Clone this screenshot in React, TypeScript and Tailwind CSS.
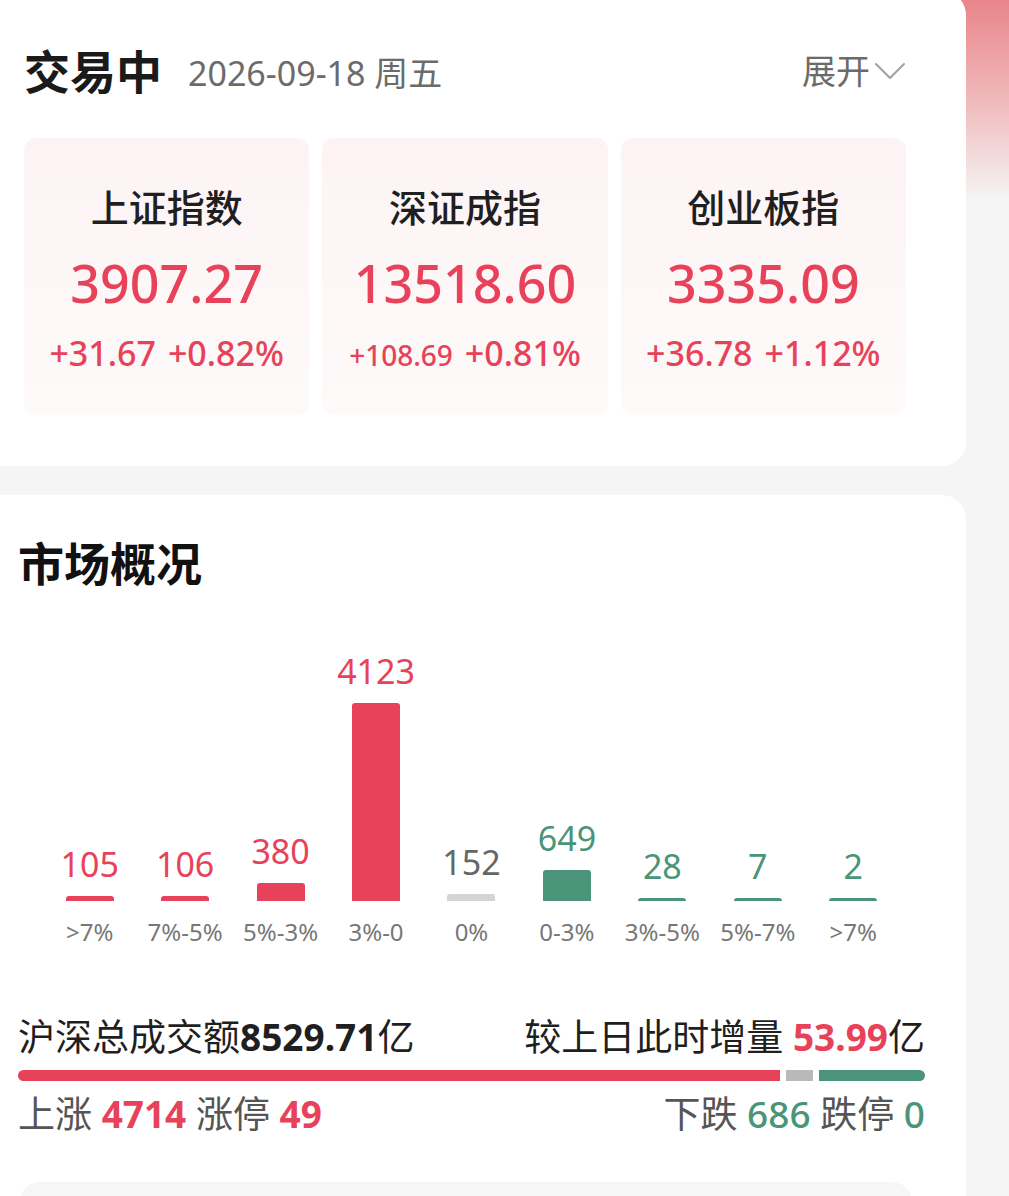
import React from 'react';

// 指数卡片
const indices = [
  { name: '上证指数', value: '3907.27', change: '+31.67', pct: '+0.82%', small: false },
  { name: '深证成指', value: '13518.60', change: '+108.69', pct: '+0.81%', small: true },
  { name: '创业板指', value: '3335.09', change: '+36.78', pct: '+1.12%', small: false },
];

type Tone = 'red' | 'gray' | 'green';

const dist: { v: number; label: string; tone: Tone }[] = [
  { v: 105, label: '>7%', tone: 'red' },
  { v: 106, label: '7%-5%', tone: 'red' },
  { v: 380, label: '5%-3%', tone: 'red' },
  { v: 4123, label: '3%-0', tone: 'red' },
  { v: 152, label: '0%', tone: 'gray' },
  { v: 649, label: '0-3%', tone: 'green' },
  { v: 28, label: '3%-5%', tone: 'green' },
  { v: 7, label: '5%-7%', tone: 'green' },
  { v: 2, label: '>7%', tone: 'green' },
];

const textTone: Record<Tone, string> = {
  red: 'text-[#e8425b]',
  gray: 'text-[#666666]',
  green: 'text-[#4a9478]',
};

const barTone: Record<Tone, string> = {
  red: 'bg-[#e8425b]',
  gray: 'bg-[#d4d4d4]',
  green: 'bg-[#4a957a]',
};

const MAX_H = 198;

const ChevronDown = () => (
  <svg width="32" height="20" viewBox="0 0 32 20" fill="none" className="ml-1">
    <path d="M2 3 L16 17 L30 3" stroke="#a0a0a0" strokeWidth="2" strokeLinecap="round" strokeLinejoin="round" />
  </svg>
);

const IndexCard = ({ item }: { item: (typeof indices)[number] }) => (
  <div className="h-[277px] rounded-[12px] bg-[linear-gradient(180deg,#fdf3f4_0%,#fefafa_100%)] flex flex-col items-center pt-[45px]">
    <div className="text-[38px] leading-[48px] font-medium text-[#1f1f1f]">{item.name}</div>
    <div className="mt-[22px] text-[52px] leading-[60px] font-medium text-[#e8425b]">{item.value}</div>
    <div className="mt-[20px] flex items-baseline gap-3 leading-[40px] font-medium text-[#e8425b]">
      <span className={item.small ? 'text-[28px]' : 'text-[34px]'}>{item.change}</span>
      <span className="text-[34px]">{item.pct}</span>
    </div>
  </div>
);

export default function App() {
  // 进度条宽度（上涨 / 平盘 / 下跌）
  const segs = { up: 761, flat: 27, down: 106 };

  return (
    <div className="relative h-[1196px] overflow-hidden bg-[linear-gradient(180deg,#e8858a_0px,#f0b9bb_100px,#f5f5f5_200px,#f5f5f5_100%)] font-['Noto_Sans','Noto_Sans_CJK_SC',sans-serif]">
      {/* 交易中 */}
      <div className="-mt-[9px] w-[966px] bg-white rounded-r-[24px] pl-6 pr-[60px] pt-[52px] pb-[51px]">
        <div className="h-14 flex items-center justify-between">
          <div className="flex items-center">
            <span className="text-[46px] font-bold text-[#1a1a1a] leading-[56px]">交易中</span>
            <span className="ml-[26px] mt-1 text-[34px] text-[#6b6b6b] leading-[56px]">2026-09-18 周五</span>
          </div>
          <div className="flex items-center text-[34px] text-[#6b6b6b]">
            展开
            <ChevronDown />
          </div>
        </div>
        <div className="mt-[39px] grid grid-cols-3 gap-[13px]">
          {indices.map((it) => (
            <IndexCard key={it.name} item={it} />
          ))}
        </div>
      </div>

      {/* 市场概况 */}
      <div className="mt-[29px] w-[966px] bg-white rounded-tr-[24px] pl-[18px] pr-[41px] pt-[40px] pb-10">
        <div className="text-[46px] leading-[56px] font-bold text-[#111111]">市场概况</div>

        <div className="mt-[60px] px-6 grid grid-cols-9">
          {dist.map((d, i) => {
            const h = Math.max(3, Math.round((d.v / 4123) * MAX_H));
            return (
              <div key={i} className="flex flex-col items-center">
                <div className="h-[250px] flex flex-col items-center justify-end">
                  <div className={`text-[34px] leading-[40px] ${textTone[d.tone]}`}>{d.v}</div>
                  <div className={`mt-3 w-12 rounded-t-[3px] ${barTone[d.tone]}`} style={{ height: h }} />
                </div>
                <div className="mt-[15px] text-[24px] leading-[32px] text-[#777777] whitespace-nowrap">{d.label}</div>
              </div>
            );
          })}
        </div>

        <div className="mt-[67px] flex items-center justify-between text-[37px] leading-[44px] text-[#1f1f1f]">
          <div>
            沪深总成交额<span className="font-bold">8529.71</span>亿
          </div>
          <div>
            较上日此时增量 <span className="font-bold text-[#e8425b]">53.99</span>亿
          </div>
        </div>

        <div className="mt-[11px] h-[11px] flex gap-[6px]">
          <div className="rounded-l-full bg-[#e8425b]" style={{ flexGrow: segs.up }} />
          <div className="bg-[#b9b9bb]" style={{ flexGrow: segs.flat }} />
          <div className="rounded-r-full bg-[#4a957a]" style={{ flexGrow: segs.down }} />
        </div>

        <div className="mt-[11px] flex items-center justify-between text-[37px] leading-[44px] text-[#555555]">
          <div>
            上涨 <span className="font-bold text-[#e8425b]">4714</span> 涨停 <span className="font-bold text-[#e8425b]">49</span>
          </div>
          <div>
            下跌 <span className="font-medium text-[#4a9478]">686</span> 跌停 <span className="font-medium text-[#4a9478]">0</span>
          </div>
        </div>

        <div className="mt-[46px] mr-[13px] ml-[2px] h-[120px] rounded-[20px] bg-[#f6f6f6]" />
      </div>
    </div>
  );
}
